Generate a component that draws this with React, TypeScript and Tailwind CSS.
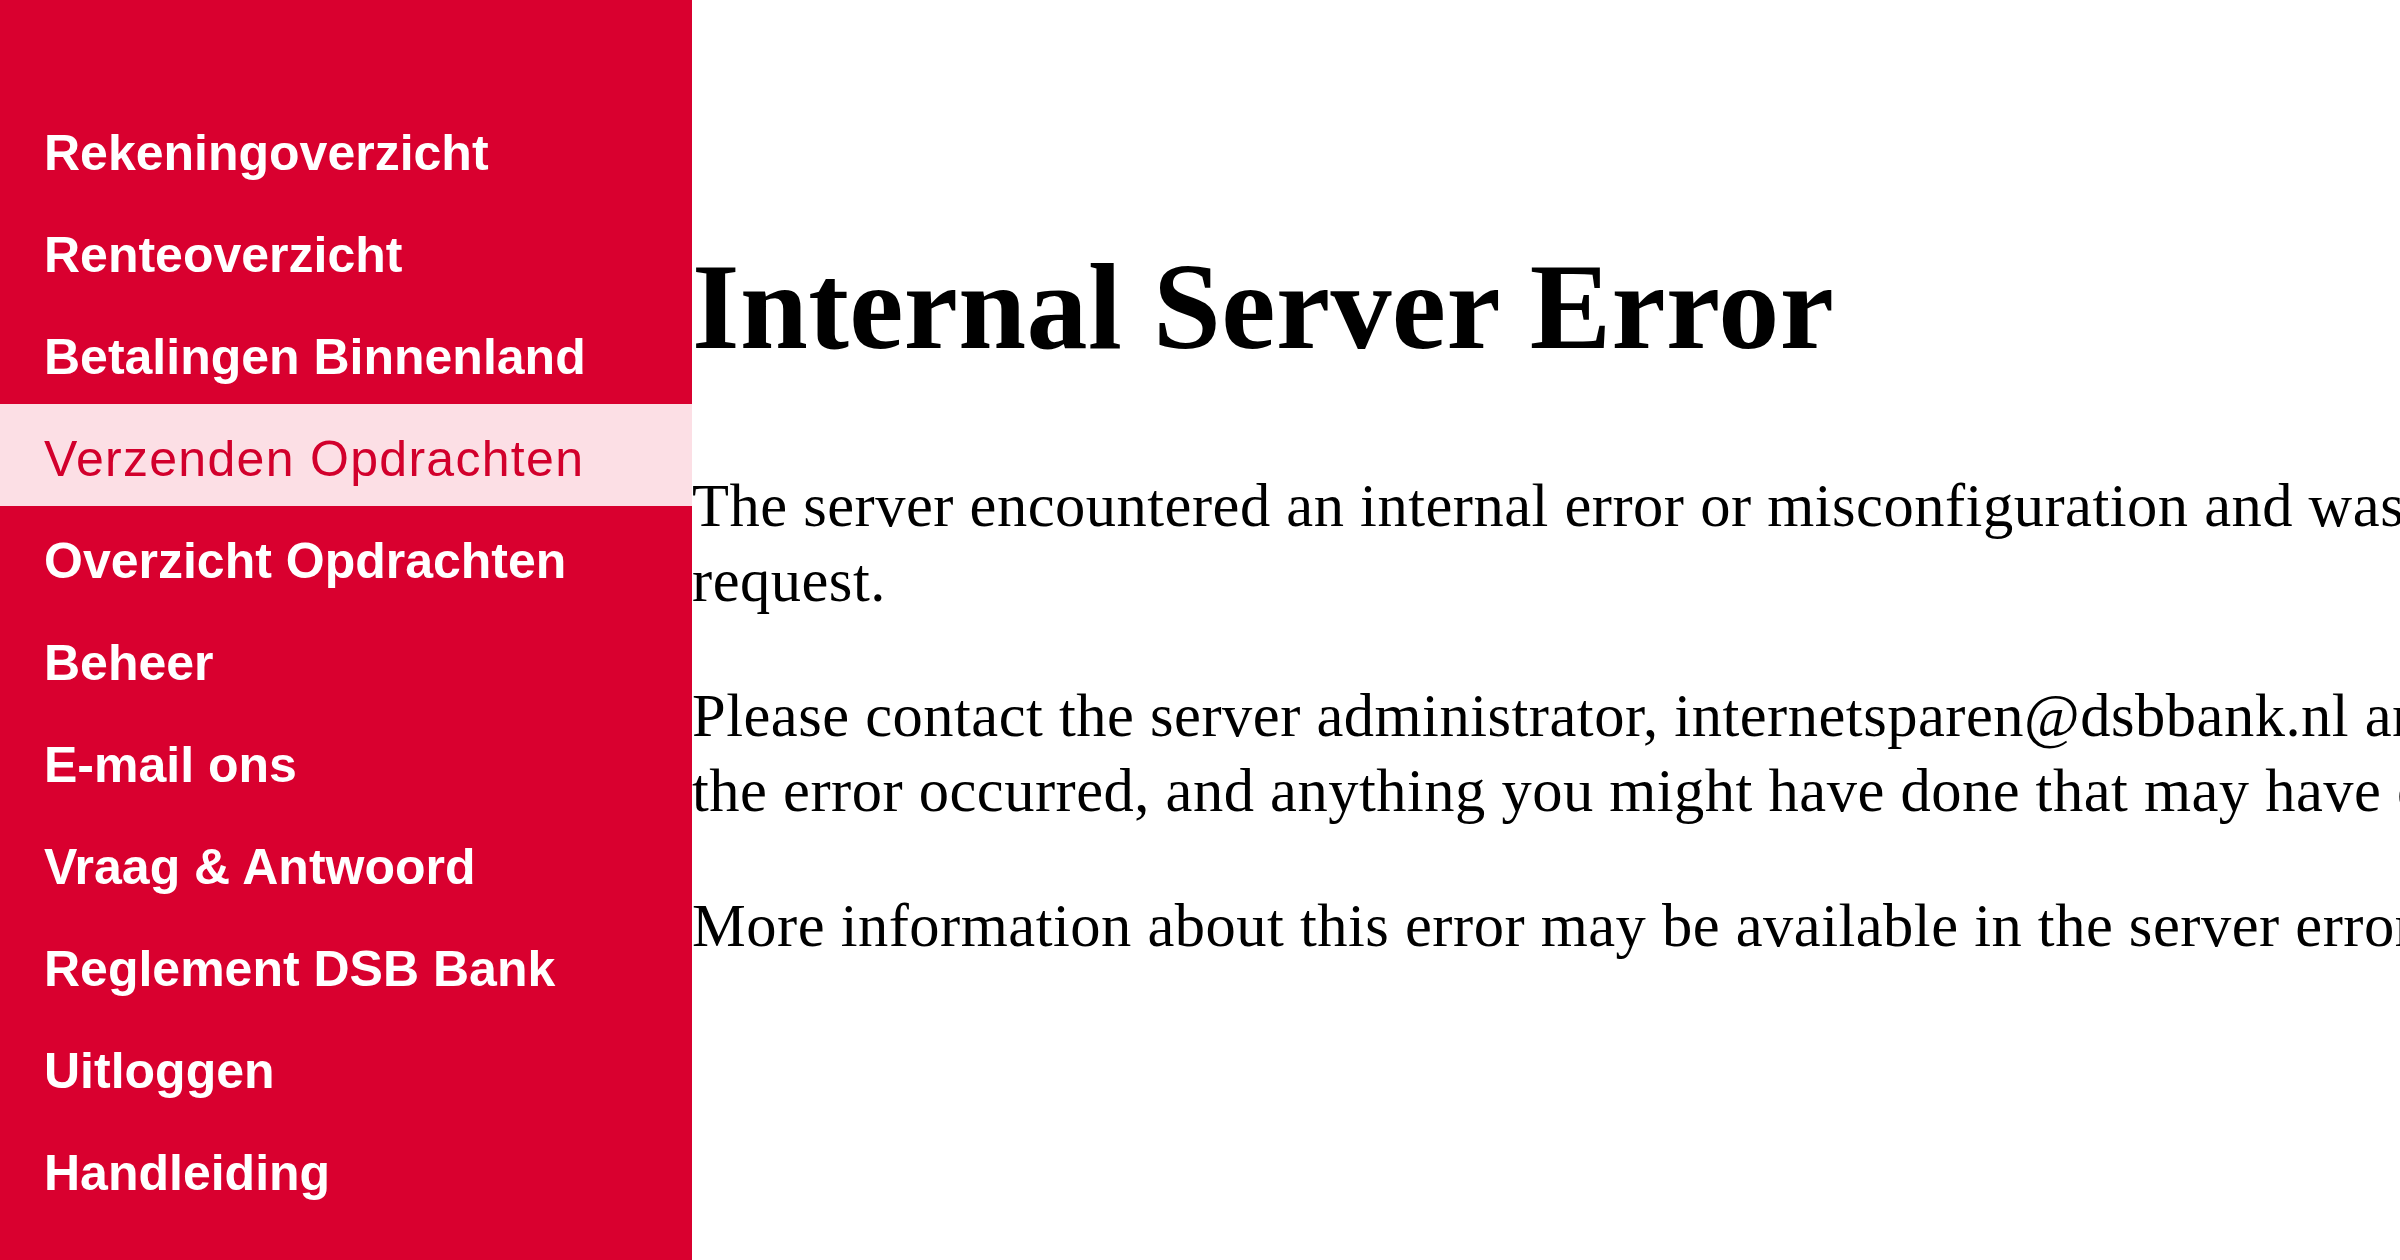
const menu = [
  "Rekeningoverzicht",
  "Renteoverzicht",
  "Betalingen Binnenland",
  "Verzenden Opdrachten",
  "Overzicht Opdrachten",
  "Beheer",
  "E-mail ons",
  "Vraag & Antwoord",
  "Reglement DSB Bank",
  "Uitloggen",
  "Handleiding",
];

const active = "Verzenden Opdrachten";

export default function App() {
  return (
    <div className="flex w-[2400px] h-[1260px] overflow-hidden bg-white">
      <nav className="w-[692px] shrink-0 bg-[#d9002f] pt-[98px] font-['Liberation_Sans',Arial,sans-serif]">
        {menu.map((item) =>
          item === active ? (
            <div
              key={item}
              className="h-[102px] pt-[26px] pl-[44px] leading-[58px] text-[50px] tracking-[1.3px] bg-[#fcdfe5] text-[#d2002c] whitespace-nowrap"
            >
              {item}
            </div>
          ) : (
            <div
              key={item}
              className="h-[102px] pt-[26px] pl-[44px] leading-[58px] text-[50px] font-bold text-white whitespace-nowrap"
            >
              {item}
            </div>
          )
        )}
      </nav>
      <main className="flex-1 min-w-0 pt-[237px] text-black font-['Liberation_Serif','Times_New_Roman',serif]">
        <h1 className="text-[122px] leading-[140px] font-bold tracking-[0.4px] mb-[91px] whitespace-nowrap">
          Internal Server Error
        </h1>
        <div className="w-[2415px] text-[60.5px] leading-[75px] tracking-[0.5px]">
          <p className="mb-[60px]">
            The server encountered an internal error or misconfiguration and
            was unable to complete your request.
          </p>
          <p className="mb-[60px]">
            Please contact the server administrator, internetsparen@dsbbank.nl
            and inform them of the time the error occurred, and anything you
            might have done that may have caused the error.
          </p>
          <p>
            More information about this error may be available in the server
            error log.
          </p>
        </div>
      </main>
    </div>
  );
}
